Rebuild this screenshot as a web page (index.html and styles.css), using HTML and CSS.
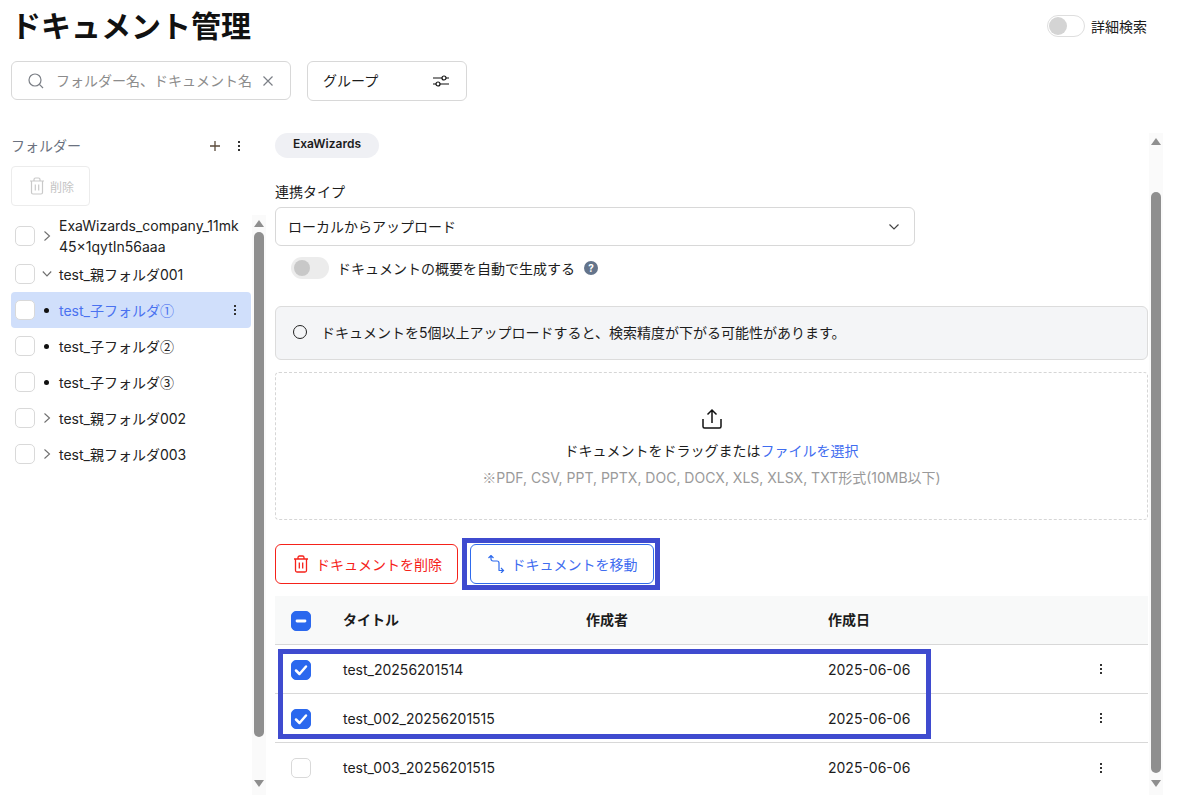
FILE: index.html
```html
<!DOCTYPE html>
<html lang="ja">
<head>
    <meta charset="UTF-8">
    <meta name="viewport" content="width=device-width, initial-scale=1.0">
    <title>ドキュメント管理</title>
    <link rel="stylesheet" href="styles.css">
</head>
<body>
    <div class="page">
        <div class="header">
            <h1 class="title">ドキュメント管理</h1>
            <div class="detail-search">
                <span class="toggle toggle-white"><span class="knob"></span></span>
                <span>詳細検索</span>
            </div>
        </div>

        <div class="toolbar">
            <div class="search-box">
                <svg width="18" height="18" viewBox="0 0 18 18" fill="none" stroke="#7b7f86" stroke-width="1.2"><circle cx="8" cy="8" r="6"/><path d="M12.4 12.4 16 16"/></svg>
                <span class="placeholder">フォルダー名、ドキュメント名</span>
                <svg width="12" height="12" viewBox="0 0 12 12" fill="none" stroke="#7b7f86" stroke-width="1.2"><path d="M1.5 1.5l9 9M10.5 1.5l-9 9"/></svg>
            </div>
            <div class="group-select">
                <span class="lift">グループ</span>
                <svg width="18" height="14" viewBox="0 0 18 14" fill="none" stroke="#111" stroke-width="1.2"><path d="M1 4h9M14 4h3M1 10h3M8 10h9"/><circle cx="12" cy="4" r="2"/><circle cx="6" cy="10" r="2"/></svg>
            </div>
        </div>

        <div class="content">
            <div class="sidebar">
                <div class="side-col">
                    <div class="folder-head">
                        <span class="folder-label lift">フォルダー</span>
                        <svg class="plus" width="12" height="12" viewBox="0 0 12 12" fill="none" stroke="#5a4a3a" stroke-width="1.3"><path d="M6 1v10M1 6h10"/></svg>
                        <span class="dots"><i></i><i></i><i></i></span>
                    </div>
                    <div class="side-delete">
                        <svg width="16" height="18" viewBox="0 0 16 18" fill="none" stroke="#c9c9c9" stroke-width="1.2"><path d="M1 4h14M5 4V2.500A1.500 1.500 0 0 1 6.500 1h3A1.500 1.500 0 0 1 11 2.500V4M2.500 4v11.500A1.500 1.500 0 0 0 4 17h8a1.500 1.500 0 0 0 1.500-1.500V4M6.300 7.500v6M9.700 7.500v6"/></svg>
                        <span>削除</span>
                    </div>
                </div>
                <div class="tree-wrap">
                    <ul class="tree">
                        <li class="tree-row tree-row-tall">
                            <span class="check"></span>
                            <svg class="chev" width="8" height="12" viewBox="0 0 8 12" fill="none" stroke="#6f6f6f" stroke-width="1.100"><path d="M1.500 1.500 6.500 6l-5 4.500"/></svg>
                            <span class="tree-name">ExaWizards_company_11mk<br>45×1qytIn56aaa</span>
                        </li>
                        <li class="tree-row">
                            <span class="check"></span>
                            <svg class="chev" width="10" height="8" viewBox="0 0 10 8" fill="none" stroke="#6f6f6f" stroke-width="1.100"><path d="M.8 1.500 5 6l4.200-4.500"/></svg>
                            <span class="tree-name">test_親フォルダ001</span>
                        </li>
                        <li class="tree-row tree-row-active">
                            <span class="check"></span>
                            <span class="bullet"></span>
                            <span class="tree-name">test_子フォルダ<span class="cjk">①</span></span>
                            <span class="dots"><i></i><i></i><i></i></span>
                        </li>
                        <li class="tree-row">
                            <span class="check"></span>
                            <span class="bullet"></span>
                            <span class="tree-name">test_子フォルダ<span class="cjk">②</span></span>
                        </li>
                        <li class="tree-row">
                            <span class="check"></span>
                            <span class="bullet"></span>
                            <span class="tree-name">test_子フォルダ<span class="cjk">③</span></span>
                        </li>
                        <li class="tree-row">
                            <span class="check"></span>
                            <svg class="chev" width="8" height="12" viewBox="0 0 8 12" fill="none" stroke="#6f6f6f" stroke-width="1.100"><path d="M1.500 1.500 6.500 6l-5 4.500"/></svg>
                            <span class="tree-name">test_親フォルダ002</span>
                        </li>
                        <li class="tree-row">
                            <span class="check"></span>
                            <svg class="chev" width="8" height="12" viewBox="0 0 8 12" fill="none" stroke="#6f6f6f" stroke-width="1.100"><path d="M1.500 1.500 6.500 6l-5 4.500"/></svg>
                            <span class="tree-name">test_親フォルダ003</span>
                        </li>
                    </ul>
                    <div class="scrollbar scrollbar-side">
                        <span class="arrow-up"></span>
                        <span class="thumb"></span>
                        <span class="arrow-down"></span>
                    </div>
                </div>
            </div>

            <div class="main">
                <div class="pill">ExaWizards</div>
                <div class="field-label">連携タイプ</div>
                <div class="select-box">
                    <span class="lift">ローカルからアップロード</span>
                    <svg width="12" height="8" viewBox="0 0 12 8" fill="none" stroke="#444" stroke-width="1.200"><path d="M1.500 1.500 6 6l4.500-4.500"/></svg>
                </div>
                <div class="auto-row">
                    <span class="toggle"><span class="knob"></span></span>
                    <span>ドキュメントの概要を自動で生成する</span>
                    <span class="help">?</span>
                </div>
                <div class="notice">
                    <span class="ring"></span>
                    <span class="lift">ドキュメントを5個以上アップロードすると、検索精度が下がる可能性があります。</span>
                </div>
                <div class="dropzone">
                    <svg width="24" height="24" viewBox="0 0 24 24" fill="none" stroke="#111" stroke-width="1.500"><path d="M12 16V3M7.500 7.500 12 3l4.500 4.500M3 12v7.500A1.500 1.500 0 0 0 4.500 21h15a1.500 1.500 0 0 0 1.500-1.500V12"/></svg>
                    <div class="drop-text">ドキュメントをドラッグまたは<span class="link">ファイルを選択</span></div>
                    <div class="drop-note"><span class="cjk">※</span>PDF, CSV, PPT, PPTX, DOC, DOCX, XLS, XLSX, TXT形式(10MB以下)</div>
                </div>
                <div class="actions">
                    <div class="btn btn-delete">
                        <svg width="16" height="18" viewBox="0 0 16 18" fill="none" stroke="#f5221a" stroke-width="1.300"><path d="M1 4h14M5 4V2.500A1.500 1.500 0 0 1 6.500 1h3A1.500 1.500 0 0 1 11 2.500V4M2.500 4v11.500A1.500 1.500 0 0 0 4 17h8a1.500 1.500 0 0 0 1.500-1.500V4M6.300 7.500v6M9.700 7.500v6"/></svg>
                        <span>ドキュメントを削除</span>
                    </div>
                    <div class="btn btn-move">
                        <svg width="18" height="18" viewBox="0 0 18 18" fill="none" stroke="#2f6bed" stroke-width="1.200"><path d="M1.500 4 4 1.500 6.500 4M4 1.500V5a2 2 0 0 0 2 2h4a2 2 0 0 1 2 2v7M11.500 16.500h5M14 14l2.500 2.500L14 19" transform="translate(0 -1)"/></svg>
                        <span>ドキュメントを移動</span>
                    </div>
                </div>
                <div class="table">
                    <div class="table-row table-head">
                        <span class="check check-on">
                            <svg width="12" height="12" viewBox="0 0 12 12" fill="none" stroke="#fff" stroke-width="2.800" stroke-linecap="round"><path d="M2 6h8"/></svg>
                        </span>
                        <span class="lift">タイトル</span>
                        <span class="lift">作成者</span>
                        <span class="lift">作成日</span>
                        <span></span>
                    </div>
                    <div class="table-row">
                        <span class="check check-on">
                            <svg width="14" height="12" viewBox="0 0 14 12" fill="none" stroke="#fff" stroke-width="2.500" stroke-linecap="round" stroke-linejoin="round"><path d="M2 6.500 5.500 10 12 2.500"/></svg>
                        </span>
                        <span>test_20256201514</span>
                        <span></span>
                        <span>2025-06-06</span>
                        <span class="dots"><i></i><i></i><i></i></span>
                    </div>
                    <div class="table-row">
                        <span class="check check-on">
                            <svg width="14" height="12" viewBox="0 0 14 12" fill="none" stroke="#fff" stroke-width="2.500" stroke-linecap="round" stroke-linejoin="round"><path d="M2 6.500 5.500 10 12 2.500"/></svg>
                        </span>
                        <span>test_002_20256201515</span>
                        <span></span>
                        <span>2025-06-06</span>
                        <span class="dots"><i></i><i></i><i></i></span>
                    </div>
                    <div class="table-row table-row-last">
                        <span class="check"></span>
                        <span>test_003_20256201515</span>
                        <span></span>
                        <span>2025-06-06</span>
                        <span class="dots"><i></i><i></i><i></i></span>
                    </div>
                </div>
                <!-- annotation frames drawn over the screen -->
                <div class="mark mark-move"></div>
                <div class="mark mark-rows"></div>
            </div>

            <div class="scrollbar scrollbar-main">
                <span class="arrow-up"></span>
                <span class="thumb"></span>
                <span class="arrow-down"></span>
            </div>
        </div>
    </div>
</body>
</html>
```

FILE: styles.css
```css
* {
    box-sizing: border-box;
}
html, body {
    margin: 0;
    height: 100%;
    overflow: hidden;
}
body {
    font-family: Inter, "Noto Sans CJK JP", sans-serif;
    font-size: 14px;
    color: #1c1c1c;
    background-color: white;
}
.cjk {
    font-family: "Noto Sans CJK JP", sans-serif;
}
.lift {
    padding-bottom: 2px;
}
.page {
    height: 795px;
    padding: 0 14px 0 11px;
    display: flex;
    flex-direction: column;
}
.header {
    height: 54px;
    padding: 0 16px 2px 0;
    display: flex;
    justify-content: space-between;
    align-items: center;
}
.title {
    margin: 0;
    font-size: 30px;
    line-height: 40px;
    font-weight: 700;
    color: #111;
}
.detail-search {
    display: flex;
    align-items: center;
    gap: 6px;
}
.toggle {
    width: 38px;
    height: 22px;
    padding: 3px;
    border-radius: 11px;
    background-color: #ececec;
    display: inline-block;
    flex-shrink: 0;
}
.toggle-white {
    background-color: white;
    border: 1px solid #dedede;
    padding: 1px;
}
.knob {
    display: block;
    width: 16px;
    height: 16px;
    border-radius: 50%;
    background-color: #c8c8c8;
}
.toggle-white .knob {
    width: 18px;
    height: 18px;
    background-color: #d4d4d4;
}
.toolbar {
    margin-top: 7px;
    display: flex;
    align-items: flex-start;
    gap: 16px;
}
.search-box {
    width: 280px;
    height: 39px;
    padding: 0 16px 0 15px;
    border: 1px solid #d8d8d8;
    border-radius: 6px;
    display: flex;
    align-items: center;
}
.placeholder {
    flex: 1;
    margin-left: 11px;
    padding-bottom: 2px;
    color: #8c8c8c;
    white-space: nowrap;
}
.group-select {
    width: 160px;
    height: 40px;
    padding: 0 16px 0 15px;
    border: 1px solid #d8d8d8;
    border-radius: 6px;
    display: flex;
    align-items: center;
    justify-content: space-between;
}
.content {
    flex: 1;
    min-height: 0;
    margin-top: 32px;
    display: flex;
}
.sidebar {
    width: 255px;
    display: flex;
    flex-direction: column;
    margin-right: 9px;
}
.side-col {
    padding-right: 15px;
}
.folder-head {
    height: 26px;
    display: flex;
    align-items: center;
    color: #6b7280;
}
.folder-label {
    flex: 1;
}
.plus {
    margin-right: 14px;
}
.dots {
    display: inline-flex;
    flex-direction: column;
    gap: 2px;
    width: 8px;
    align-items: center;
}
.dots i {
    display: block;
    width: 2px;
    height: 2px;
    background-color: #333;
}
.folder-head .dots {
    margin-right: 8px;
}
.side-delete {
    margin-top: 7px;
    width: 79px;
    height: 40px;
    padding-left: 2px;
    border: 1px solid #ececec;
    border-radius: 4px;
    display: flex;
    align-items: center;
    justify-content: center;
    gap: 5px;
    font-size: 12px;
    color: #c4c4c4;
}
.tree-wrap {
    flex: 1;
    min-height: 0;
    margin-top: 9px;
    display: flex;
}
.tree {
    list-style: none;
    margin: 1px 0 0;
    padding: 0;
    width: 240px;
}
.tree-row {
    height: 36px;
    padding: 0 12px 0 4px;
    display: flex;
    align-items: center;
    border-radius: 4px;
    color: #222;
}
.tree-row-tall {
    height: 40px;
    line-height: 21px;
}
.check {
    width: 20px;
    height: 20px;
    border: 1px solid #d9d9d9;
    border-radius: 5px;
    background-color: white;
    flex-shrink: 0;
    display: flex;
    align-items: center;
    justify-content: center;
}
.check-on {
    background-color: #2b68ee;
    border-color: #2b68ee;
}
.chev {
    width: 12px;
    margin: 0 6px;
    flex-shrink: 0;
}
.bullet {
    width: 5px;
    height: 5px;
    border-radius: 50%;
    background-color: #111;
    flex-shrink: 0;
    margin: 0 10px 0 9px;
}
.tree-name {
    flex: 1;
    white-space: nowrap;
}
.tree-row-active {
    background-color: #d0dffb;
    color: #4a72f0;
}
.scrollbar {
    width: 14px;
    background-color: #fafafa;
    display: flex;
    flex-direction: column;
    align-items: center;
    flex-shrink: 0;
}
.scrollbar-side {
    margin-left: 1px;
}
.thumb {
    width: 10px;
    background-color: #8f8f8f;
    border-radius: 5px;
}
.arrow-up, .arrow-down {
    width: 0;
    height: 0;
    border-left: 5px solid transparent;
    border-right: 5px solid transparent;
}
.arrow-up {
    border-bottom: 7px solid #8f8f8f;
    margin-top: 5px;
}
.arrow-down {
    border-top: 7px solid #8f8f8f;
    margin-top: auto;
    margin-bottom: 8px;
}
.scrollbar-side .thumb {
    height: 505px;
    margin-top: 5px;
}
.scrollbar-main {
    margin-left: 1px;
}
.scrollbar-main .thumb {
    height: 581px;
    margin-top: 47px;
}
.main {
    width: 873px;
    position: relative;
}
.pill {
    width: 104px;
    height: 25px;
    border-radius: 13px;
    background-color: #eff0f4;
    font-size: 12px;
    font-weight: 600;
    line-height: 22px;
    text-align: center;
    color: #1c1c1c;
}
.field-label {
    margin-top: 24px;
    height: 20px;
    line-height: 20px;
}
.select-box {
    margin-top: 5px;
    width: 640px;
    height: 39px;
    padding: 0 14px 0 12px;
    border: 1px solid #d8d8d8;
    border-radius: 6px;
    display: flex;
    align-items: center;
    justify-content: space-between;
}
.auto-row {
    margin-top: 11px;
    padding-left: 16px;
    display: flex;
    align-items: center;
    height: 22px;
}
.auto-row .toggle {
    margin-right: 8px;
}
.help {
    margin-left: 9px;
    width: 14px;
    height: 14px;
    border-radius: 50%;
    background-color: #64748b;
    color: white;
    font-size: 10px;
    font-weight: 700;
    line-height: 14px;
    text-align: center;
}
.notice {
    margin-top: 27px;
    height: 54px;
    padding: 0 17px;
    background-color: #f4f5f7;
    border: 1px solid #dcdcdc;
    border-radius: 6px;
    display: flex;
    align-items: center;
    gap: 14px;
}
.ring {
    width: 14px;
    height: 14px;
    border: 1.500px solid #222;
    border-radius: 50%;
    flex-shrink: 0;
    margin-top: -2px;
}
.dropzone {
    margin-top: 12px;
    height: 148px;
    border: 1px dashed #d6d6d6;
    border-radius: 4px;
    display: flex;
    flex-direction: column;
    align-items: center;
    padding-top: 34px;
}
.drop-text {
    margin-top: 10px;
    height: 20px;
    line-height: 20px;
}
.link {
    color: #3f6df0;
}
.drop-note {
    margin-top: 6px;
    height: 20px;
    line-height: 20px;
    color: #9a9a9a;
}
.actions {
    margin-top: 24px;
    display: flex;
    gap: 12px;
}
.btn {
    height: 40px;
    border-radius: 6px;
    display: flex;
    align-items: center;
    justify-content: center;
    gap: 7px;
    background-color: white;
}
.btn-delete {
    width: 183px;
    padding-left: 2px;
    border: 1px solid #f5221a;
    color: #f5221a;
}
.btn-move {
    width: 184px;
    border: 1px solid #2f6bed;
    color: #3f6df0;
}
.table {
    margin-top: 12px;
}
.table-row {
    height: 49px;
    padding-left: 16px;
    display: grid;
    grid-template-columns: 52px 243px 242px 1fr 51px;
    align-items: center;
    border-bottom: 1px solid #d8d8d8;
}
.table-row .check {
    margin-top: 1px;
}
.table-row-last {
    border-bottom: none;
}
.table-head {
    background-color: #f8f9f9;
    font-weight: 700;
}
.table-row .dots {
    justify-self: start;
}
.mark {
    position: absolute;
    border: 5px solid #3f4bcf;
}
.mark-move {
    left: 187px;
    top: 405px;
    width: 198px;
    height: 52px;
}
.mark-rows {
    left: 3px;
    top: 516px;
    width: 653px;
    height: 90px;
}
```
